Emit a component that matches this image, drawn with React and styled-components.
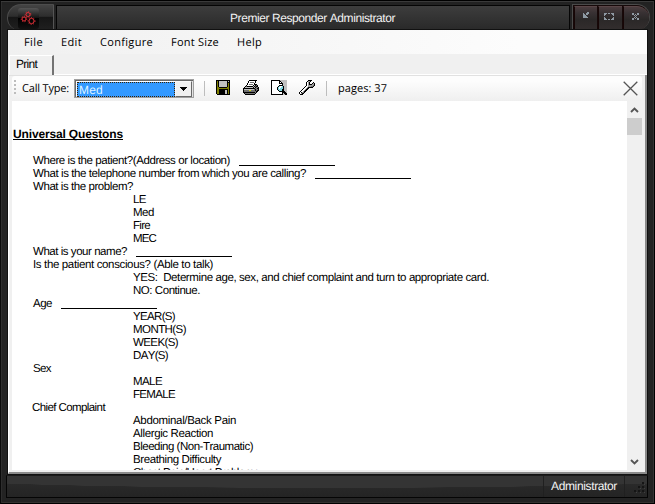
import React, { useLayoutEffect, useRef, useState } from "react";
import styled, { createGlobalStyle, css } from "styled-components";

const GlobalStyle = createGlobalStyle`
  * { box-sizing: border-box; }
  html, body { margin: 0; padding: 0; overflow: hidden; }
  body { font-family: "Liberation Sans", Arial, sans-serif; font-size: 11px; color: #000; }
`;

/* ---------- text with a fixed run length ---------- */

const Run = styled.span`
  display: inline-block;
  white-space: pre;
  font-kerning: none;
  text-rendering: geometricPrecision;
`;

function FitText({ width, children }) {
  const ref = useRef(null);
  const [tracking, setTracking] = useState(0);
  useLayoutEffect(() => {
    const natural = ref.current.getBoundingClientRect().width;
    setTracking((width - natural) / children.length);
  }, []);
  return (
    <Run ref={ref} style={{ letterSpacing: `${tracking}px` }}>
      {children}
    </Run>
  );
}

/* ---------- window frame ---------- */

const Window = styled.div`
  width: 655px;
  height: 504px;
  display: flex;
  flex-direction: column;
  padding: 0 6px 5px 5px;
  background: #232323;
  border: 1px solid #000;
  border-left-color: #0a0a0a;
  box-shadow: inset 0 1px 0 #3a3a3a, inset 1px 0 0 #2e2e2e, inset -1px 0 0 #343434, inset 0 -1px 0 #343230,
    inset 0 4px 0 #222;
`;

const Header = styled.div`
  height: 29px;
  flex: none;
  display: flex;
  padding-top: 3px;
  margin-right: -2px;
`;

const AppButton = styled.div`
  width: 47px;
  height: 26px;
  margin-left: 1px;
  display: flex;
  justify-content: flex-start;
  padding: 3px 0 0 10px;
  border: 1px solid #4c4c4c;
  border-right-color: #555;
  border-bottom: 0;
  border-radius: 14px 0 0 12px;
  background: linear-gradient(#444 0, #2d2d2d 45%, #161616 50%, #202020 100%);
`;

const AppIcon = styled.svg`
  display: block;
  width: 21px;
  height: 21px;
`;

const TitlePanel = styled.div`
  width: 514px;
  margin: 1px 0 0 2px;
  border: 1px solid #050505;
  border-bottom: 0;
  background: linear-gradient(#3d3d3d, #292929);
  color: #f2f2f2;
  font-size: 12px;
  line-height: 14px;
  padding: 5px 0 0 173px;
`;

const Captions = styled.div`
  display: flex;
  margin: 0 0 0 2px;
  width: 78px;
  height: 26px;
  border: 1px solid #4a4a4a;
  border-bottom: 0;
  border-radius: 0 15px 15px 0;
  background: #160909;
  padding: 1px 0 0 1px;
  gap: 1px;
`;

const CaptionButton = styled.div`
  width: ${(p) => p.$w}px;
  height: 24px;
  padding: ${(p) => p.$top}px ${(p) => p.$right}px 0 0;
  display: flex;
  justify-content: center;
  background: linear-gradient(#4a3c3e 0, #383133 25%, #2b2828 55%, #332e2e 100%);
  border-left: 1px solid #170606;
  border-top: 1px solid #5a4547;
  ${(p) =>
    p.$last &&
    css`
      border-radius: 0 13px 13px 0;
    `}
`;

const Client = styled.div`
  height: 444px;
  flex: none;
  margin: 0 1px 0 2px;
  display: flex;
  flex-direction: column;
  background: #f0f0f0;
  width: 639px;
  box-shadow: 0 0 0 1px #111;
`;

const StatusBar = styled.div`
  height: 24px;
  margin: 1px 0 0 0;
  display: flex;
  border: 1px solid #050505;
  border-top-color: #1a1a1a;
  background: radial-gradient(ellipse 420px 12px at 50% 0, #343434 98%, transparent 100%), linear-gradient(#2d2d2d, #242424);
  color: #f4f4f4;
`;

const StatusSpace = styled.div`
  width: 537px;
  border-right: 1px solid #202020;
`;

const StatusText = styled.div`
  width: 81px;
  padding: 3px 0 0 7px;
  font-size: 12px;
  line-height: 14px;
  border-right: 1px solid #202020;
`;

const ResizeGrip = styled.svg`
  width: 12px;
  height: 12px;
  margin: 5px 0 0 9px;
`;

/* ---------- menu and tab ---------- */

const MenuBar = styled.div`
  height: 24px;
  flex: none;
  display: flex;
  align-items: flex-start;
  gap: 18px;
  padding: 5px 0 0 16px;
  background: linear-gradient(90deg, #f0f0f0, #fcfcfc 80%);
  font: 11px/16px "Open Sans", "Noto Sans", sans-serif;
`;

const TabStrip = styled.div`
  height: 21px;
  flex: none;
  display: flex;
  padding: 1px 0 0 1px;
`;

const Tab = styled.div`
  width: 45px;
  height: 20px;
  padding: 1px 0 0 6px;
  border-left: 1px solid #fff;
  border-top: 1px solid #fff;
  border-right: 2px solid #737373;
  font-size: 12px;
  line-height: 14px;
`;

const TabLine = styled.div`
  flex: 1;
  align-self: flex-end;
  height: 1px;
  background: #fff;
`;

const TabPage = styled.div`
  flex: 1;
  display: flex;
  flex-direction: column;
  padding: 1px 3px 2px 3px;
  border-left: 1px solid #fff;
  border-right: 2px solid #8a8a8a;
  border-bottom: 2px solid #8a8a8a;
  border-top: 0;
  box-shadow: inset 0 1px 0 #e1e1e1;
`;

/* ---------- toolbar ---------- */

const ToolBar = styled.div`
  height: 25px;
  flex: none;
  display: flex;
  background: linear-gradient(#fdfdfd 20%, #efefef);
  border-radius: 3px 3px 0 0;
  font: 11px/16px "Open Sans", "Noto Sans", sans-serif;
`;

const Grip = styled.div`
  width: 2px;
  height: 15px;
  margin: 4px 0 0 2px;
  background: repeating-linear-gradient(#bdbdbd 0 2px, transparent 2px 4px);
`;

const ToolLabel = styled.div`
  padding-top: 4px;
  width: ${(p) => p.$w}px;
  margin-left: ${(p) => p.$gap}px;
`;

const Combo = styled.div`
  width: 120px;
  height: 19px;
  margin: 3px 0 0 0;
  display: flex;
  padding: 1px;
  border: 1px solid #a0a0a0;
  box-shadow: inset 1px 1px 0 #696969, inset -1px -1px 0 #e3e3e3;
  background: #fff;
`;

const ComboValue = styled.div`
  width: 98px;
  height: 15px;
  margin: 1px 0 0 1px;
  padding: 1px 0 0 1px;
  background: #3399ff;
  border: 1px dotted #3a2000;
  color: #dff3ff;
  font: 12px/12px "Liberation Sans", Arial, sans-serif;
`;

const ComboArrow = styled.div`
  width: 17px;
  height: 16px;
  display: flex;
  align-items: center;
  justify-content: center;
  border: 1px solid #f8f8f8;
  border-right-color: #696969;
  border-bottom-color: #696969;
  background: #f0f0f0;
`;

const Separator = styled.div`
  width: 1px;
  height: 15px;
  margin: 5px 0 0 ${(p) => p.$gap}px;
  background: #bdbdbd;
`;

const Tools = styled.div`
  display: flex;
  gap: 12px;
  margin: 4px 0 0 11px;
  width: 101px;
`;

const CloseIcon = styled.svg`
  width: 15px;
  height: 15px;
  margin: 5px 4px 0 auto;
`;

/* ---------- document ---------- */

const Viewer = styled.div`
  flex: 1;
  min-height: 0;
  display: flex;
`;

const Document = styled.div`
  width: 615px;
  height: 369px;
  overflow: hidden;
  background: #fff;
  padding: 26px 0 0 1px;
  font-size: 11.5px;
  line-height: 13px;
`;

const Heading = styled.div`
  height: 14px;
  width: 110px;
  margin-bottom: 14px;
  font-size: 12px;
  font-weight: 700;
  line-height: 14px;
  white-space: nowrap;
  background: linear-gradient(#000, #000) 0 12px / 110px 1px no-repeat;
`;

const Line = styled.div`
  height: 13px;
  display: flex;
  align-items: flex-start;
  padding-left: ${(p) => p.$indent}px;
`;

const Blank = styled.div`
  width: 96px;
  height: 1px;
  margin: 10px 0 0 9px;
  background: #000;
`;

const ScrollBar = styled.div`
  width: 15px;
  height: 369px;
  display: flex;
  flex-direction: column;
  align-items: center;
  background: #f0f0f0;
`;

const ScrollArrow = styled.svg`
  width: 9px;
  height: 6px;
  margin-top: ${(p) => p.$top}px;
`;

const Thumb = styled.div`
  width: 15px;
  height: 17px;
  margin-top: 5px;
  background: #cdcdcd;
`;

/* ---------- pixel icons ---------- */

const PALETTE = {
  k: "#000000", o: "#808000", g: "#c0c0c0", d: "#707070", w: "#ffffff", l: "#a0a0a0",
  c: "#7fd6e0", y: "#d8d820", t: "#8e99a3",
};

const FLOPPY = [
  "kkkkkkkkkkkkkk.",
  "kokggggggggkgk.",
  "kokggggggggkkk.",
  "kokggggggggkok.",
  "kokggggggggkok.",
  "kokggggggggkok.",
  "kokggggggggkok.",
  "kookkkkkkkkook.",
  "kooooooooooook.",
  "kookkkkkkkkkok.",
  "kookkkkkkggkok.",
  "kookkkkkkggkok.",
  "kookkkkkkggkok.",
  "kookkkkkkggkok.",
  ".kkkkkkkkkkkkk.",
];

const PRINTER = [
  "......kkkkkkkk..",
  ".....kwwwwwwk...",
  ".....kwddddwk...",
  "....kwwwwwwk....",
  "....kwddddwkkk..",
  "...kwwwwwwkgkdk.",
  "..kdkkkkkkgkdkk.",
  ".kggggggggkgkddk",
  "kkkkkkkkkkkkddkk",
  "kggggggggggdkddk",
  "kdddddyyddddkdkk",
  "kddddddddddddkk.",
  "kkkkkkkkkkkkdk..",
  ".kddddddddddk...",
  "..kkkkkkkkkk....",
];

const PREVIEW = [
  "kkkkkkkkkggggggg",
  "kwwwwwwwkkgggggg",
  "kwwwwwwwkwkggggg",
  "kwwwwwwwkkkkgggg",
  "kwwwwwwwwwwkgggg",
  "kwwwwwwwkkkkgggg",
  "kwwwwwwkcwwckggg",
  "kwwwwwkcwwcckggg",
  "kwwwwwkcwccckggg",
  "kwwwwwkcccckkggg",
  "kwwwwwwkccckkggg",
  "kwwwwwwwkkkkkkgg",
  "kwwwwwwwwwwkkkkg",
  "kwwwwwwwwwwkgkkk",
  "kkkkkkkkkkkkggkk",
];

const WRENCH = [
  ".........kkkk...",
  "........kllk....",
  ".......kwlk...k.",
  ".......kwlk..klk",
  ".......kwlkkkllk",
  ".......kwllllldk",
  "......kwwlllddk.",
  ".....kwwlkkkkk..",
  "....kwwlkk......",
  "...kwwlkk.......",
  "..kwwlkk........",
  ".kwwlkk.........",
  "kwkldk..........",
  "kwlkk...........",
  ".kkk............",
];

const MINIMIZE = ["....tt", "t..ttt", "tt.tt.", "ttt...", "tttt..", "ttttt."];
const MAXIMIZE = ["ttt.tt.ttt", "tt......tt", "t........t", "..........", "t........t", "tt......tt", "ttt.tt.ttt"];
const CLOSE = ["tt...tt", "tt.t.tt", "..t.t..", "...t...", "..t.t..", "tt.t.tt", "tt...tt"];
const DROPDOWN = ["kkkkkkk", ".kkkkk.", "..kkk..", "...k..."];

const PixelSvg = styled.svg`
  display: block;
  flex: none;
  shape-rendering: crispEdges;
`;

function PixelIcon({ art }) {
  const w = Math.max(...art.map((row) => row.length));
  return (
    <PixelSvg width={w} height={art.length} viewBox={`0 0 ${w} ${art.length}`}>
      {art.flatMap((row, y) =>
        [...row].map((ch, x) =>
          PALETTE[ch] ? <rect key={`${x}-${y}`} x={x} y={y} width="1" height="1" fill={PALETTE[ch]} /> : null
        )
      )}
    </PixelSvg>
  );
}

/* ---------- data ---------- */

const MENU = [["File", 19], ["Edit", 21], ["Configure", 53], ["Font Size", 48], ["Help", 25]];

const LINES = [
  [20, "Where is the patient?(Address or location)", 197, true],
  [20, "What is the telephone number from which you are calling?", 273, true],
  [20, "What is the problem?", 100],
  [120, "LE", 13],
  [120, "Med", 21],
  [120, "Fire", 17],
  [120, "MEC", 23],
  [20, "What is your name?", 94, true],
  [20, "Is the patient conscious? (Able to talk)", 180],
  [120, "YES:  Determine age, sex, and chief complaint and turn to appropriate card.", 356],
  [120, "NO: Continue.", 67],
  [20, "Age", 19, true],
  [120, "YEAR(S)", 42],
  [120, "MONTH(S)", 53],
  [120, "WEEK(S)", 45],
  [120, "DAY(S)", 35],
  [20, "Sex", 18],
  [120, "MALE", 29],
  [120, "FEMALE", 42],
  [19, "Chief Complaint", 73],
  [120, "Abdominal/Back Pain", 103],
  [120, "Allergic Reaction", 80],
  [120, "Bleeding (Non-Traumatic)", 120],
  [120, "Breathing Difficulty", 88],
  [120, "Chest Pain/Heart Problems", 126],
];

export default function App() {
  return (
    <>
      <GlobalStyle />
      <Window>
        <Header>
          <AppButton>
            <AppIcon viewBox="0 0 21 21">
              <defs>
                <linearGradient id="tile" x1="0" y1="0" x2="0" y2="1">
                  <stop offset="0" stopColor="#555" />
                  <stop offset=".45" stopColor="#171717" />
                  <stop offset=".5" stopColor="#000" />
                  <stop offset="1" stopColor="#111" />
                </linearGradient>
              </defs>
              <rect width="21" height="21" rx="3" fill="url(#tile)" />
              <g fill="none" stroke="#df3038" strokeWidth="1">
                <circle cx="10" cy="6.5" r="2" />
                <circle cx="6" cy="11" r="2" />
                <circle cx="13.5" cy="13" r="2.6" />
              </g>
              <g fill="none" stroke="#df3038" strokeWidth="1" strokeDasharray="1 1.6">
                <circle cx="10" cy="6.5" r="2.8" />
                <circle cx="6" cy="11" r="2.8" />
                <circle cx="13.5" cy="13" r="3.5" />
              </g>
            </AppIcon>
          </AppButton>
          <TitlePanel>
            <FitText width={165}>Premier Responder Administrator</FitText>
          </TitlePanel>
          <Captions>
            <CaptionButton $w={23} $top={5} $right={0}><PixelIcon art={MINIMIZE} /></CaptionButton>
            <CaptionButton $w={25} $top={6} $right={3}><PixelIcon art={MAXIMIZE} /></CaptionButton>
            <CaptionButton $w={26} $top={6} $right={3} $last><PixelIcon art={CLOSE} /></CaptionButton>
          </Captions>
        </Header>
        <Client>
          <MenuBar>
            {MENU.map(([label, w]) => (
              <FitText key={label} width={w}>{label}</FitText>
            ))}
          </MenuBar>
          <TabStrip>
            <Tab><FitText width={21}>Print</FitText></Tab>
            <TabLine />
          </TabStrip>
          <TabPage>
            <ToolBar>
              <Grip />
              <ToolLabel $w={52} $gap={6}><FitText width={47}>Call Type:</FitText></ToolLabel>
              <Combo>
                <ComboValue><FitText width={24}>Med</FitText></ComboValue>
                <ComboArrow>
                  <PixelIcon art={DROPDOWN} />
                </ComboArrow>
              </Combo>
              <Separator $gap={10} />
              <Tools>
                <PixelIcon art={FLOPPY} />
                <PixelIcon art={PRINTER} />
                <PixelIcon art={PREVIEW} />
                <PixelIcon art={WRENCH} />
              </Tools>
              <Separator $gap={9} />
              <ToolLabel $w={60} $gap={11}><FitText width={49}>pages: 37</FitText></ToolLabel>
              <CloseIcon viewBox="0 0 15 15">
                <path d="M.7.7 14.3 14.3M14.3.7.7 14.3" stroke="#555" strokeWidth="1.3" fill="none" />
              </CloseIcon>
            </ToolBar>
            <Viewer>
              <Document>
                <Heading><FitText width={110}>Universal Questons</FitText></Heading>
                {LINES.map(([indent, text, width, blank]) => (
                  <Line key={text} $indent={indent}>
                    <FitText width={width}>{text}</FitText>
                    {blank && <Blank />}
                  </Line>
                ))}
              </Document>
              <ScrollBar>
                <ScrollArrow $top={6} viewBox="0 0 9 6">
                  <path d="M1 5 4.5 1.5 8 5" fill="none" stroke="#555" strokeWidth="1.9" />
                </ScrollArrow>
                <Thumb />
                <ScrollArrow $top={324} viewBox="0 0 9 6">
                  <path d="M1 1 4.5 4.5 8 1" fill="none" stroke="#555" strokeWidth="1.9" />
                </ScrollArrow>
              </ScrollBar>
            </Viewer>
          </TabPage>
        </Client>
        <StatusBar>
          <StatusSpace />
          <StatusText><FitText width={66}>Administrator</FitText></StatusText>
          <ResizeGrip viewBox="0 0 12 12">
            <path d="M8 1h2v2h-2zM4 5h2v2h-2zM8 5h2v2h-2zM0 9h2v2h-2zM4 9h2v2h-2zM8 9h2v2h-2z" fill="#151515" />
            <path d="M10 3h1v1h-1zM6 7h1v1h-1zM10 7h1v1h-1zM2 11h1v1h-1zM6 11h1v1h-1zM10 11h1v1h-1z" fill="#404040" />
          </ResizeGrip>
        </StatusBar>
      </Window>
    </>
  );
}
